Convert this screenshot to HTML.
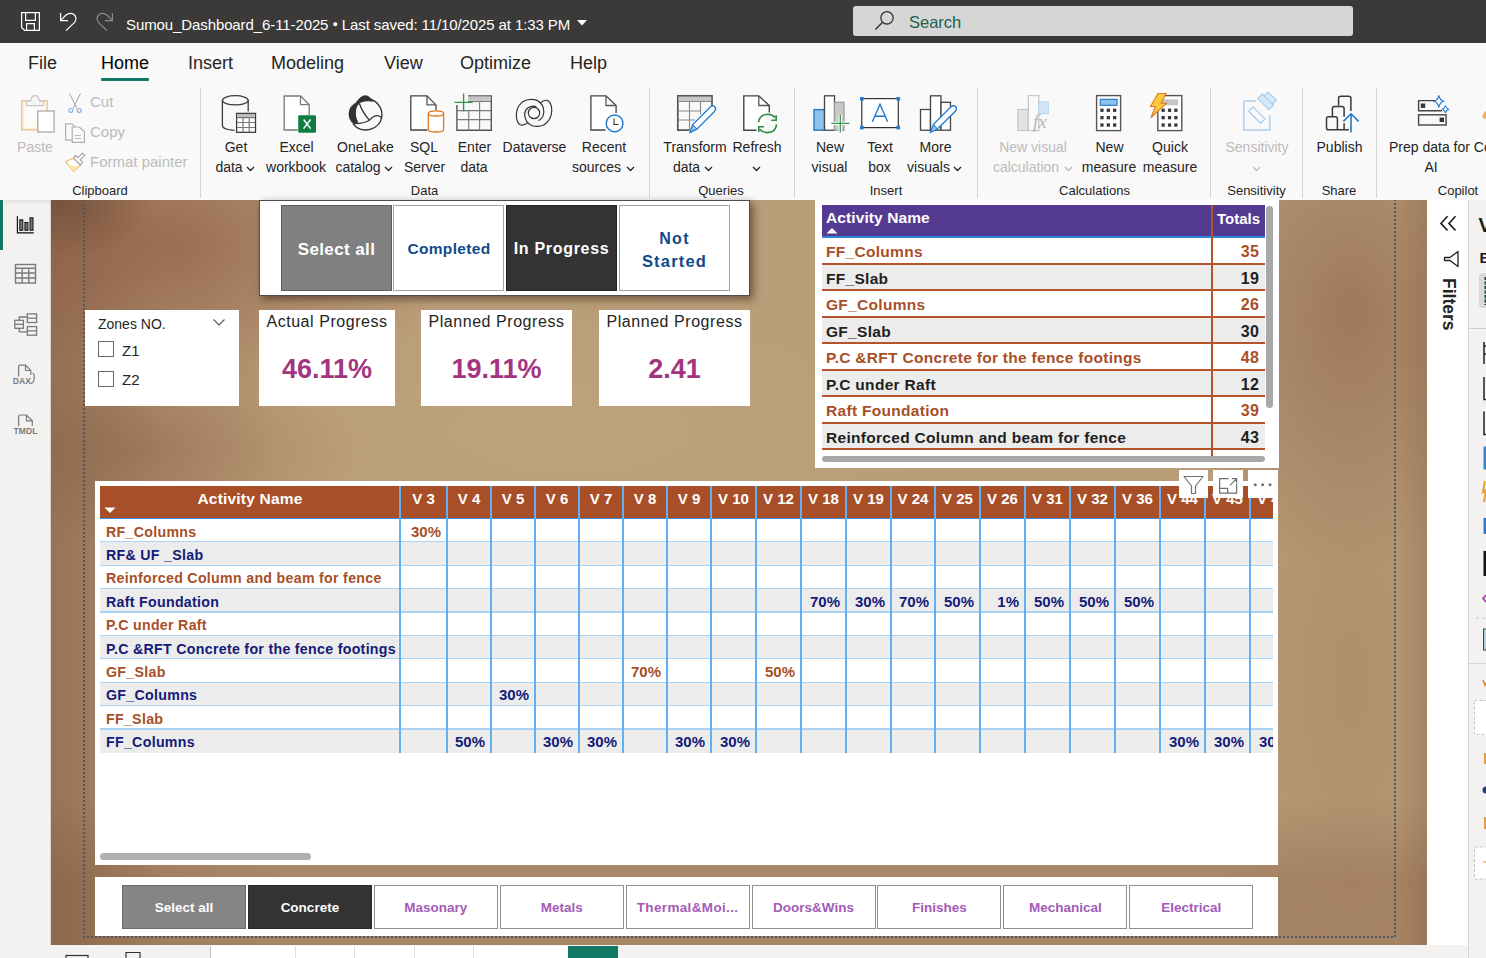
<!DOCTYPE html>
<html><head><meta charset="utf-8">
<style>
*{margin:0;padding:0;box-sizing:border-box}
html,body{width:1486px;height:958px;overflow:hidden;background:#f3f2f1;font-family:"Liberation Sans",sans-serif;position:relative}
.a{position:absolute;white-space:nowrap}
.c{position:absolute;white-space:nowrap;text-align:center}
#title{left:0;top:0;width:1486px;height:43px;background:#3b3a39}
#tabs{left:0;top:43px;width:1486px;height:42px;background:#f9f9f9}
#ribbon{left:0;top:85px;width:1486px;height:115px;background:#f9f9f9}
#nav{left:0;top:200px;width:51px;height:758px;background:#f3f2f1}
#canvas{left:51px;top:200px;width:1376px;height:745px;background:#a8845f;overflow:hidden}
#filters{left:1427px;top:200px;width:41px;height:758px;background:#fff}
#viz{left:1468px;top:200px;width:18px;height:758px;background:#f3f2f1;border-left:1px solid #e1dfdd}
#bottom{left:51px;top:945px;width:1376px;height:13px;background:#f3f2f1}
.rl{font-size:14px;line-height:20px;color:#252423}
.gl{font-size:13px;line-height:16px;color:#252423}
.dis{color:#bdbbb9}
.sep{position:absolute;top:88px;width:1px;height:110px;background:#d6d4d2}
</style></head>
<body>
<div id="title" class="a">
 <svg class="a" style="left:0;top:0" width="130" height="43" viewBox="0 0 130 43">
  <g fill="none" stroke="#fff" stroke-width="1.2">
   <path d="M21.6 12.6 H39.4 V30.4 H24.6 L21.6 27.4 Z"/>
   <path d="M25.6 12.6 V20.4 H35.4 V12.6"/>
   <path d="M26.6 30.4 V23.6 H34.4 V30.4"/>
  </g>
  <g fill="none" stroke="#fff" stroke-width="1.2">
   <path d="M60.6 13 V20.6 H68"/>
   <path d="M60.8 20.4 L66 15 Q70 12 74 14.5 Q77.6 18 74.6 22.4 L66 30.6"/>
  </g>
  <g fill="none" stroke="#8c8c8c" stroke-width="1.2">
   <path d="M112.4 13 V20.6 H105"/>
   <path d="M112.2 20.4 L107 15 Q103 12 99 14.5 Q95.4 18 98.4 22.4 L107 30.6"/>
  </g>
 </svg>
 <div class="a" style="left:126px;top:16px;font-size:15px;color:#fff;white-space:nowrap;letter-spacing:-0.1px">Sumou_Dashboard_6-11-2025 <span style="font-size:9px;position:relative;top:-3px">&#9679;</span> Last saved: 11/10/2025 at 1:33 PM</div>
 <svg class="a" style="left:576px;top:19px" width="12" height="8"><path d="M1 1 H11 L6 6.5 Z" fill="#fff"/></svg>
 <div class="a" style="left:853px;top:6px;width:500px;height:30px;background:#d6d6d6;border-radius:3px"></div>
 <svg class="a" style="left:872px;top:9px" width="24" height="24" viewBox="0 0 24 24"><circle cx="15" cy="8.8" r="6.2" fill="none" stroke="#333" stroke-width="1.3"/><path d="M10.6 13.2 L3.4 20.4" stroke="#333" stroke-width="1.4"/></svg>
 <div class="a" style="left:909px;top:13px;font-size:16.5px;color:#20604f">Search</div>
</div>

<div id="tabs" class="a">
 <div class="a" style="left:28px;top:10px;font-size:18px;color:#252423">File</div>
 <div class="a" style="left:101px;top:10px;font-size:18px;color:#000">Home</div>
 <div class="a" style="left:101px;top:35px;width:48px;height:3px;background:#117865;border-radius:1px"></div>
 <div class="a" style="left:188px;top:10px;font-size:18px;color:#252423">Insert</div>
 <div class="a" style="left:271px;top:10px;font-size:18px;color:#252423">Modeling</div>
 <div class="a" style="left:384px;top:10px;font-size:18px;color:#252423">View</div>
 <div class="a" style="left:460px;top:10px;font-size:18px;color:#252423">Optimize</div>
 <div class="a" style="left:570px;top:10px;font-size:18px;color:#252423">Help</div>
</div>

<div id="ribbon" class="a">
<div class="c rl dis" style="left:-65px;top:52px;width:200px">Paste</div>
<div class="a rl dis" style="left:90px;top:7px;font-size:15px">Cut</div>
<div class="a rl dis" style="left:90px;top:37px;font-size:15px">Copy</div>
<div class="a rl dis" style="left:90px;top:67px;font-size:15px">Format painter</div>
<div class="c gl" style="left:0px;top:98px;width:200px">Clipboard</div>
<div class="sep" style="left:200px;top:3px"></div>
<div class="c rl" style="left:136px;top:52px;width:200px">Get</div>
<div class="c rl" style="left:129px;top:72px;width:200px">data</div>
<svg class="a" style="left:246px;top:81px" width="9" height="6"><path d="M1 1 L4.5 4.5 L8 1" fill="none" stroke="#252423" stroke-width="1.3"/></svg>
<div class="c rl" style="left:196.5px;top:52px;width:200px">Excel</div>
<div class="c rl" style="left:196px;top:72px;width:200px">workbook</div>
<div class="c rl" style="left:265.5px;top:52px;width:200px">OneLake</div>
<div class="c rl" style="left:258px;top:72px;width:200px">catalog</div>
<svg class="a" style="left:384px;top:81px" width="9" height="6"><path d="M1 1 L4.5 4.5 L8 1" fill="none" stroke="#252423" stroke-width="1.3"/></svg>
<div class="c rl" style="left:324px;top:52px;width:200px">SQL</div>
<div class="c rl" style="left:324.5px;top:72px;width:200px">Server</div>
<div class="c rl" style="left:374.5px;top:52px;width:200px">Enter</div>
<div class="c rl" style="left:374px;top:72px;width:200px">data</div>
<div class="c rl" style="left:434.5px;top:52px;width:200px">Dataverse</div>
<div class="c rl" style="left:504px;top:52px;width:200px">Recent</div>
<div class="c rl" style="left:496.5px;top:72px;width:200px">sources</div>
<svg class="a" style="left:626px;top:81px" width="9" height="6"><path d="M1 1 L4.5 4.5 L8 1" fill="none" stroke="#252423" stroke-width="1.3"/></svg>
<div class="c gl" style="left:324.5px;top:98px;width:200px">Data</div>
<div class="sep" style="left:649px;top:3px"></div>
<div class="c rl" style="left:595px;top:52px;width:200px">Transform</div>
<div class="c rl" style="left:586.5px;top:72px;width:200px">data</div>
<svg class="a" style="left:704px;top:81px" width="9" height="6"><path d="M1 1 L4.5 4.5 L8 1" fill="none" stroke="#252423" stroke-width="1.3"/></svg>
<div class="c rl" style="left:657px;top:52px;width:200px">Refresh</div>
<svg class="a" style="left:752px;top:81px" width="9" height="6"><path d="M1 1 L4.5 4.5 L8 1" fill="none" stroke="#252423" stroke-width="1.3"/></svg>
<div class="c gl" style="left:621px;top:98px;width:200px">Queries</div>
<div class="sep" style="left:794px;top:3px"></div>
<div class="c rl" style="left:730px;top:52px;width:200px">New</div>
<div class="c rl" style="left:729.5px;top:72px;width:200px">visual</div>
<div class="c rl" style="left:780px;top:52px;width:200px">Text</div>
<div class="c rl" style="left:779.5px;top:72px;width:200px">box</div>
<div class="c rl" style="left:835.5px;top:52px;width:200px">More</div>
<div class="c rl" style="left:828.5px;top:72px;width:200px">visuals</div>
<svg class="a" style="left:953px;top:81px" width="9" height="6"><path d="M1 1 L4.5 4.5 L8 1" fill="none" stroke="#252423" stroke-width="1.3"/></svg>
<div class="c gl" style="left:786px;top:98px;width:200px">Insert</div>
<div class="sep" style="left:977px;top:3px"></div>
<div class="c rl dis" style="left:933px;top:52px;width:200px">New visual</div>
<div class="c rl dis" style="left:926px;top:72px;width:200px">calculation</div>
<svg class="a" style="left:1064px;top:81px" width="9" height="6"><path d="M1 1 L4.5 4.5 L8 1" fill="none" stroke="#bdbbb9" stroke-width="1.3"/></svg>
<div class="c rl" style="left:1009.5px;top:52px;width:200px">New</div>
<div class="c rl" style="left:1009px;top:72px;width:200px">measure</div>
<div class="c rl" style="left:1070px;top:52px;width:200px">Quick</div>
<div class="c rl" style="left:1070px;top:72px;width:200px">measure</div>
<div class="c gl" style="left:994.5px;top:98px;width:200px">Calculations</div>
<div class="sep" style="left:1210px;top:3px"></div>
<div class="c rl dis" style="left:1157px;top:52px;width:200px">Sensitivity</div>
<svg class="a" style="left:1252px;top:81px" width="9" height="6"><path d="M1 1 L4.5 4.5 L8 1" fill="none" stroke="#bdbbb9" stroke-width="1.3"/></svg>
<div class="c gl" style="left:1156.5px;top:98px;width:200px">Sensitivity</div>
<div class="sep" style="left:1302px;top:3px"></div>
<div class="c rl" style="left:1239.5px;top:52px;width:200px">Publish</div>
<div class="c gl" style="left:1239px;top:98px;width:200px">Share</div>
<div class="sep" style="left:1376px;top:3px"></div>
<div class="a rl" style="left:1389px;top:52px">Prep data for Copilot</div>
<div class="c rl" style="left:1331px;top:72px;width:200px">AI</div>
<div class="c gl" style="left:1358px;top:98px;width:200px">Copilot</div></div>

<svg class="a" style="left:0;top:85px" width="1486" height="115" viewBox="0 85 1486 115">
<!-- Paste -->
<rect x="21.8" y="100.8" width="25.4" height="29" fill="#fdfbf5" stroke="#eac59a" stroke-width="1.5"/><rect x="23.4" y="102.4" width="22.2" height="25.8" fill="none" stroke="#fdf0c8" stroke-width="1.2"/>
<path d="M26.4 105.6 V101 H30.5 Q31.5 95.5 35 95.5 Q38.5 95.5 39.5 101 H43.4 V105.6 Z" fill="#f5f5f5" stroke="#c8c8c8" stroke-width="1.3"/>
<rect x="37.8" y="111" width="16.3" height="21" fill="#fff" stroke="#b4b4b4" stroke-width="1.5"/>
<!-- Cut -->
<g stroke="#a9a9a9" stroke-width="1" fill="none"><path d="M69.5 93.5 L77 108.5 M80.5 93.5 L73 108.5"/></g>
<g stroke="#7fb3e0" stroke-width="1.2" fill="none"><circle cx="70.8" cy="110.4" r="1.9"/><circle cx="79.2" cy="110.4" r="1.9"/></g>
<!-- Copy -->
<g stroke="#b0b0b0" stroke-width="1.2" fill="#fafafa"><path d="M65.6 123.8 H72 L75 126.8 V140.2 H65.6 Z"/><path d="M72.2 127 H79.5 L84.4 131.8 V142.4 H72.2 Z"/></g>
<g stroke="#b8b8b8" stroke-width="1"><path d="M75 135.5 H81 M75 138.5 H81"/></g>
<!-- Format painter -->
<path d="M73.5 158.2 L65.6 161.6 L73.6 171.4 L80.6 165 Z" fill="#fff" stroke="#efb56a" stroke-width="1.1" stroke-linejoin="round"/>
<path d="M67.5 164 L74 166.5 L78.6 166.6 L73.6 171.2 Z" fill="#fde7a0"/>
<path d="M73.5 158.2 L75.6 155.4 L78 157.6 L82.4 153.2 L84.8 155.4 L80.3 159.8 L82.5 162.4 L80.6 165 Z" fill="#fff" stroke="#a9a9a9" stroke-width="1.2" stroke-linejoin="round"/>
<!-- Get data -->
<g fill="none" stroke="#3c3c3c" stroke-width="1.3">
<ellipse cx="235.3" cy="100.3" rx="12.9" ry="4.6"/>
<path d="M222.4 100.3 V125.5 Q222.4 129.6 234.6 130.3"/>
<path d="M248.2 100.3 V111.5"/>
</g>
<rect x="236.6" y="113.4" width="18.9" height="18.9" fill="#fff" stroke="#3c3c3c" stroke-width="1.3"/>
<rect x="237.3" y="114" width="17.5" height="3.3" fill="#bdbdbd"/>
<path d="M237 122.5 H255 M237 127.5 H255 M243 117.5 V132 M249.2 117.5 V132 M237 117.6 H255" stroke="#777" stroke-width="1.2"/>
<!-- Excel -->
<path d="M297.6 130 H284.2 V96 H300.5 L309.2 104.7 V115" fill="#fff" stroke="#7a7a7a" stroke-width="1.3"/>
<path d="M300.5 96 V104.7 H309.2" fill="none" stroke="#7a7a7a" stroke-width="1.3"/>
<rect x="298.2" y="115.2" width="17.8" height="17.6" rx="1.2" fill="#107c41"/>
<path d="M303.6 119.5 L310.6 128.6 M310.6 119.5 L303.6 128.6" stroke="#fff" stroke-width="1.5"/>
<!-- OneLake -->
<path d="M373.6 101.8 Q369 95 365.5 95.3 Q360 95.8 356.5 102.2 Q348.6 106 348.6 114 Q348.8 120 353 123.6 L358.4 122.6 Q355.2 117 356 110.5 Q357 104.6 361 102.6 Q367 100.4 373.6 101.8 Z" fill="#333"/>
<path d="M356.5 102.2 Q360.5 98.5 366 98.5 Q376 98.8 380.6 108 Q383.4 115 380.4 121.5 Q376 129.6 365.5 130 Q357.5 130 353 123.6" fill="none" stroke="#333" stroke-width="1.4"/>
<path d="M359.4 103.5 Q363 113.5 369.5 120.2" fill="none" stroke="#333" stroke-width="1.3"/>
<path d="M353.5 123.5 Q362.5 124 369.5 120.2 Q373.5 115.5 377.5 115.7 Q380 116 381.3 117.6" fill="none" stroke="#333" stroke-width="1.3"/>
<!-- SQL -->
<path d="M427.5 130 H410.8 V95.9 H427 L436 104.9 V110" fill="#fff" stroke="#444" stroke-width="1.3"/>
<path d="M427 95.9 V104.9 H436" fill="none" stroke="#555" stroke-width="1.3"/>
<path d="M428.3 113.4 V129.4 Q428.3 132 436 132 Q443.6 132 443.6 129.4 V113.4" fill="#fff" stroke="#e07a1f" stroke-width="1.3"/>
<ellipse cx="436" cy="113.4" rx="7.6" ry="2.6" fill="#fff" stroke="#e07a1f" stroke-width="1.3"/>
<!-- Enter data -->
<path d="M456.9 105 V130.2 H491.3 V95.9 H468" fill="none" stroke="#555" stroke-width="1.4"/>
<rect x="468" y="97" width="22.5" height="3.4" fill="#c6c6c6"/>
<path d="M457 110.6 H491 M457 119.6 H491 M468.7 110.6 V130 M479.6 101 V130 M468 101.4 H491" stroke="#7a7a7a" stroke-width="1.1"/>
<path d="M463.6 93.4 V111.6 M454.5 102.4 H472.6" stroke="#2e9a4f" stroke-width="1.4"/>
<!-- Dataverse -->
<g fill="none" stroke="#333" stroke-width="1.2">
<path d="M528 122.6 Q523 126.5 519.5 124.5 Q516 121.5 516.4 113 Q517.5 104.5 524.5 100.8 Q531 98 537.5 100.6 Q543.8 104 543.8 112 Q543.5 118 538.5 120.6"/>
<path d="M540.2 103.2 Q543.5 99.8 547 100.3 Q551.6 101.6 551.8 110.5 Q551.5 120 544 124.8 Q538 127.6 531.5 125.5 Q525.2 122.5 524.6 114.5 Q525 108.5 530.5 106.6 Q534 105.6 536.5 107"/>
<circle cx="534" cy="113" r="5.7"/>
</g>
<!-- Recent -->
<path d="M605.5 130 H590.9 V95.9 H606 L616.1 105.5 V113" fill="#fff" stroke="#444" stroke-width="1.3"/>
<path d="M606 95.9 V105.5 H616.1" fill="none" stroke="#555" stroke-width="1.3"/>
<circle cx="614.6" cy="123.4" r="8.4" fill="#fff" stroke="#1f7ad0" stroke-width="1.4"/>
<path d="M614 118.5 V124.5 H618.5" fill="none" stroke="#333" stroke-width="1.1"/>
<!-- Transform -->
<path d="M689.5 130.2 H677.8 V95.9 H712 V107" fill="none" stroke="#555" stroke-width="1.7"/>
<rect x="678.6" y="96.8" width="32.6" height="4.3" fill="#c8c8c8"/>
<path d="M678 101.5 H711.5 M678 111 H701 M678 120 H695 M689.5 101.5 V130 M700.5 101.5 V114" stroke="#888" stroke-width="1.1"/>
<path d="M690 132.4 L692.8 124.5 L710.5 106.8 Q713.4 105 715 107 Q716.5 109 714.5 111.5 L696.8 129.2 Z" fill="#fff" stroke="#1f7ad0" stroke-width="1.3"/>
<path d="M690 132.4 L692.8 124.5 L696.8 129.2 Z" fill="#8cc1ef" stroke="#1f7ad0" stroke-width="1"/>
<!-- Refresh -->
<path d="M756.5 130.2 H743.8 V95.9 H758.8 L769.3 105.5 V112.5" fill="#fff" stroke="#444" stroke-width="1.4"/>
<path d="M758.8 95.9 V105.5 H769.3" fill="none" stroke="#555" stroke-width="1.3"/>
<g fill="none" stroke="#2e8b46" stroke-width="1.6">
<path d="M758.5 122.5 Q759.5 114.5 767.6 114.3 Q772.5 114.5 775.2 117.6"/>
<path d="M776.6 124.4 Q775.8 132.4 767.6 132.6 Q762.5 132.5 759.8 129.2"/>
<path d="M776.2 115.2 V120.2 H771.2 M758.8 132 V126.8 H764"/>
</g>
<!-- New visual -->
<rect x="814" y="109.6" width="10.5" height="20.6" fill="#8dc2ee" stroke="#1f72c0" stroke-width="1.3"/>
<rect x="824.5" y="95.8" width="10" height="34.4" fill="#fff" stroke="#444" stroke-width="1.3"/>
<rect x="834.5" y="102.3" width="9.5" height="27.9" fill="#c8c8c8" stroke="#9a9a9a" stroke-width="1.2"/>
<path d="M840.3 114.4 V132.4 M831.3 123.4 H849.8" stroke="#fafafa" stroke-width="3.5"/>
<path d="M840.3 114.4 V132.4 M831.3 123.4 H849.3" stroke="#3a9a55" stroke-width="1.3"/>
<!-- Text box -->
<rect x="861.8" y="98.6" width="36.5" height="29" fill="#fff" stroke="#333" stroke-width="1.2"/>
<g fill="#1f7ad0"><rect x="860" y="97" width="3.6" height="3.6"/><rect x="896.5" y="97" width="3.6" height="3.6"/><rect x="860" y="125.8" width="3.6" height="3.6"/><rect x="896.5" y="125.8" width="3.6" height="3.6"/></g>
<path d="M872.4 121.8 L880 104.2 L887.6 121.8 M874.8 116.2 H885.2" fill="none" stroke="#1f7ad0" stroke-width="1.4"/>
<!-- More visuals -->
<g fill="#fff" stroke="#444" stroke-width="1.3"><rect x="920.5" y="109.5" width="10" height="20.7"/><rect x="930.5" y="95.8" width="10.5" height="34.4"/><rect x="941" y="102.3" width="9.5" height="27.9"/></g>
<path d="M930.5 132.3 L933.5 124.4 L951.3 106.6 Q954.2 104.8 955.8 106.8 Q957.3 108.8 955.3 111.3 L937.5 129 Z" fill="#fff" stroke="#1f7ad0" stroke-width="1.3"/>
<path d="M930.5 132.3 L933.5 124.4 L937.5 129 Z" fill="#8cc1ef" stroke="#1f7ad0" stroke-width="1"/>
<!-- New visual calc (disabled) -->
<rect x="1017.8" y="109.5" width="10.5" height="21" fill="#e3e3e3" stroke="#c6c6c6" stroke-width="1.2"/>
<rect x="1028.3" y="95.6" width="10.5" height="34.9" fill="#fafafa" stroke="#c6c6c6" stroke-width="1.2"/>
<rect x="1038.8" y="101.8" width="9.6" height="12" fill="#d4e6f5" stroke="#b5d5ee" stroke-width="1"/>
<text x="1033" y="128" font-family="Liberation Serif" font-style="italic" font-size="19" fill="#b8b8b8">fx</text>
<!-- New measure -->
<rect x="1096.6" y="95.6" width="24" height="35" fill="#fff" stroke="#555" stroke-width="1.4"/>
<rect x="1100.2" y="99.3" width="16.8" height="6" fill="#8dc2ee" stroke="#1f72c0" stroke-width="1.1"/>
<g fill="#3a3a3a"><rect x="1100.3" y="108.6" width="3.3" height="3.3"/><rect x="1106.7" y="108.6" width="3.3" height="3.3"/><rect x="1113" y="108.6" width="3.3" height="3.3"/><rect x="1100.3" y="116" width="3.3" height="3.3"/><rect x="1106.7" y="116" width="3.3" height="3.3"/><rect x="1113" y="116" width="3.3" height="3.3"/><rect x="1100.3" y="123.4" width="3.3" height="3.3"/><rect x="1106.7" y="123.4" width="3.3" height="3.3"/><rect x="1113" y="123.4" width="3.3" height="3.3"/></g>
<!-- Quick measure -->
<rect x="1157.8" y="95.6" width="24" height="35" fill="#fff" stroke="#555" stroke-width="1.4"/>
<rect x="1161.4" y="99.3" width="16.8" height="6" fill="#c6c6c6"/>
<g fill="#3a3a3a"><rect x="1161.5" y="108.6" width="3.3" height="3.3"/><rect x="1167.9" y="108.6" width="3.3" height="3.3"/><rect x="1174.2" y="108.6" width="3.3" height="3.3"/><rect x="1161.5" y="116" width="3.3" height="3.3"/><rect x="1167.9" y="116" width="3.3" height="3.3"/><rect x="1174.2" y="116" width="3.3" height="3.3"/><rect x="1161.5" y="123.4" width="3.3" height="3.3"/><rect x="1167.9" y="123.4" width="3.3" height="3.3"/><rect x="1174.2" y="123.4" width="3.3" height="3.3"/></g>
<path d="M1158 93.5 H1166 L1161 103.3 H1166.5 L1151 117.5 L1155.5 106.5 H1150.5 Z" fill="#ffc83d" stroke="#e07a1f" stroke-width="1.1"/>
<!-- Sensitivity disabled -->
<path d="M1243.8 101 V130 H1269.8 V115" fill="none" stroke="#a9cdec" stroke-width="1.4"/>
<path d="M1243.8 101 H1256" fill="none" stroke="#a9cdec" stroke-width="1.4"/>
<path d="M1248.6 111.3 L1253 106.9 L1265 118.9 L1260.6 123.3 Z" fill="none" stroke="#a9cdec" stroke-width="1.3"/>
<path d="M1257.7 98.6 L1262.4 94 L1273.5 105.1 L1268.9 109.7 Z M1264 96 L1268 92.3 L1276.4 100.2 L1272.6 104" fill="#d8e9f6" stroke="#a9cdec" stroke-width="1.3"/>
<!-- Publish -->
<g fill="none" stroke="#3a3a3a" stroke-width="1.5">
<path d="M1338.6 105.8 V98.3 Q1338.6 96.2 1340.7 96.2 H1348.8 Q1350.9 96.2 1350.9 98.3 V111"/>
<path d="M1332.4 116 V108.7 Q1332.4 106.6 1334.5 106.6 H1342 Q1344.1 106.6 1344.1 108.7 V116.7 M1344.1 123.2 V129.8"/>
<path d="M1348.8 129.8 H1328.6 Q1326.5 129.8 1326.5 127.7 V118.8 Q1326.5 116.7 1328.6 116.7 H1335.3 Q1337.4 116.7 1337.4 118.8 V129.8"/>
</g>
<path d="M1351 132.5 V114 M1343.4 121.4 L1351 113.8 L1358.6 121.4" fill="none" stroke="#1f7ac8" stroke-width="1.6"/>
<!-- Prep data for AI -->
<g fill="none" stroke="#444" stroke-width="1.4"><path d="M1441.5 100.6 H1418.6 V110.8 H1442"/><rect x="1418.6" y="114.8" width="27.5" height="10.2"/></g>
<g fill="#333"><rect x="1420.8" y="103.5" width="4.4" height="4.4"/><rect x="1439.6" y="117.6" width="4.4" height="4.4"/></g>
<path d="M1438.8 95.3 Q1439.8 100 1443.5 101.3 Q1439.8 102.6 1438.8 107.3 Q1437.8 102.6 1434.1 101.3 Q1437.8 100 1438.8 95.3 Z" fill="#fff" stroke="#1f7ad0" stroke-width="1.2"/>
<path d="M1445.5 105.5 Q1446 108 1448.5 109.2 Q1446 110.4 1445.5 113 Q1445 110.4 1442.5 109.2 Q1445 108 1445.5 105.5 Z" fill="#fff" stroke="#1f7ad0" stroke-width="1.1"/>
<path d="M1486 111 Q1482.5 113 1482.5 117 Q1483 119 1486 119" fill="#f0b050"/>
</svg>

<div class="a" style="left:0;top:200px;width:51px;height:758px;background:#f3f2f1"></div>
<div class="a" style="left:0;top:200px;width:51px;height:5px;background:linear-gradient(to bottom,#e2e1e0,#f3f2f1)"></div>
<div class="a" style="left:50px;top:200px;width:1px;height:745px;background:#d8d6d4"></div>
<div class="a" style="left:0;top:200px;width:3px;height:50px;background:#117865"></div><div class="a" style="left:3px;top:200px;width:1px;height:50px;background:#fff"></div>
<svg class="a" style="left:0;top:200px" width="51" height="250" viewBox="0 200 51 250">
<path d="M17.4 216.3 V232.8 H33.8" fill="none" stroke="#111" stroke-width="1.2"/>
<g fill="#777" stroke="#111" stroke-width="1"><rect x="19.8" y="219.8" width="3" height="10.5"/><rect x="24.9" y="222.5" width="3" height="7.8"/><rect x="30" y="217.8" width="3" height="12.5"/></g>
<g fill="none" stroke="#7a7a7a" stroke-width="1.4"><rect x="15.5" y="264.5" width="20" height="18.5"/><path d="M15.5 268.3 H35.5 M15.5 273 H35.5 M15.5 278 H35.5 M22.2 268.3 V283 M28.8 268.3 V283"/></g>
<g fill="none" stroke="#7a7a7a" stroke-width="1.3"><rect x="14.8" y="320.3" width="8.6" height="8" fill="#f3f2f1"/><path d="M14.8 324.3 H23.4"/><path d="M19.3 320.3 V317 H27.3 M19.3 328.3 V331.8 H27.3"/><rect x="27.3" y="313.9" width="9.3" height="8.6" fill="#f3f2f1"/><path d="M27.3 318.2 H36.6"/><rect x="27.3" y="326.6" width="9.3" height="8.6" fill="#f3f2f1"/><path d="M27.3 330.9 H36.6"/></g>
<g fill="none" stroke="#7a7a7a" stroke-width="1.2"><path d="M18.6 376.5 V366.8 Q18.6 365.2 20.2 365.2 H25.5 L30.8 370.5 V375 M25.5 365.2 V370.5 H30.8 M32.6 373 Q34.6 373.5 34.2 378 Q34 382.5 31 383.6"/></g>
<text x="12.8" y="384.2" font-family="Liberation Sans" font-weight="bold" font-size="8.6" fill="#7a7a7a">DAX</text>
<g fill="none" stroke="#7a7a7a" stroke-width="1.2"><path d="M18.6 426 V416.6 Q18.6 415 20.2 415 H26.5 L32.3 420.8 V426 M26.5 415 V420.8 H32.3"/></g>
<text x="13.6" y="434.2" font-family="Liberation Sans" font-weight="bold" font-size="8.6" fill="#7a7a7a">TMDL</text>
</svg>
<div class="a" style="left:1427px;top:200px;width:41px;height:745px;background:#fff"></div>
<svg class="a" style="left:1427px;top:200px" width="41" height="140" viewBox="1427 200 41 140">
<path d="M1447.5 216.3 L1441 223.4 L1447.5 230.5 M1455.5 216.3 L1449 223.4 L1455.5 230.5" fill="none" stroke="#222" stroke-width="1.7"/>
<path d="M1458 251.5 V266.5 L1450 260.5 H1444.5 V257.5 H1450 Z" fill="none" stroke="#222" stroke-width="1.3" stroke-linejoin="round"/>
</svg>
<div class="a" style="left:1439px;top:278px;font-size:17.5px;font-weight:bold;line-height:20px;color:#252423;transform-origin:0 0;transform:translate(20px,0) rotate(90deg)">Filters</div>
<div class="a" style="left:1468px;top:200px;width:18px;height:758px;background:#f3f2f1;border-left:1px solid #d6d4d2"></div>
<div class="a" style="left:1478.5px;top:213.5px;font-size:19.5px;font-weight:bold;line-height:22px;color:#1b1a19">V</div>
<div class="a" style="left:1479.5px;top:249px;font-size:15px;font-weight:bold;line-height:18px;color:#1b1a19">B</div>
<div class="a" style="left:1479px;top:273px;width:12px;height:35px;background:#d9d9d9;border-radius:4px"></div>
<svg class="a" style="left:1469px;top:200px" width="17" height="758" viewBox="1469 200 17 758">
<path d="M1469 328.5 H1486" stroke="#cfcdcb" stroke-width="1"/>
<path d="M1485.5 277 V305" stroke="#2a3a35" stroke-width="2" stroke-dasharray="3 1.5"/><path d="M1485.5 283 V303" stroke="#3a8a6a" stroke-width="1" stroke-dasharray="2 5"/>
<g fill="none" stroke="#222" stroke-width="1.5"><path d="M1484 342 V364 M1486 346 H1484 M1486 354 H1484"/><path d="M1484 377 V399.5 H1486"/><path d="M1484 411.5 V434.5 H1486"/></g>
<rect x="1483.5" y="446.5" width="3" height="23" fill="#3b86d4"/>
<path d="M1485 481 L1483 492 L1486 490 L1484 502" stroke="#e8a030" stroke-width="2" fill="none"/>
<rect x="1483.5" y="518" width="3" height="16" fill="#2b7fd0"/>
<rect x="1483.5" y="551" width="3" height="25" fill="#111"/>
<path d="M1486 595 L1483 598.5 L1486 602" stroke="#a03aa0" stroke-width="1.6" fill="none"/>
<path d="M1476 618 H1486" stroke="#c8c8c8" stroke-dasharray="3 3"/>
<rect x="1483.5" y="629" width="3" height="21" fill="#b5d0d8" stroke="#444" stroke-width="1"/>
<path d="M1469 663.5 H1486" stroke="#d6d4d2"/>
<path d="M1483 680 L1485 685 L1486 683" stroke="#d88a20" stroke-width="1.6" fill="none"/>
<rect x="1474.5" y="700.5" width="13" height="34" fill="#fff" stroke="#c4c4c4" stroke-dasharray="3 2"/>
<rect x="1484" y="753" width="2" height="11" fill="#e0a040"/>
<circle cx="1486" cy="790" r="3.5" fill="#2a3a70"/>
<rect x="1484" y="817" width="2" height="12" fill="#e0a040"/>
<rect x="1474.5" y="847" width="13" height="32" fill="#fff" stroke="#c4c4c4" stroke-dasharray="3 2"/>
<path d="M1483 862 H1486" stroke="#e0a040" stroke-width="1.2"/>
</svg>
<div class="a" style="left:51px;top:945px;width:1376px;height:13px;background:#f3f2f1"></div>
<div class="a" style="left:210px;top:946px;width:358px;height:12px;background:#fff"></div>
<div class="a" style="left:210px;top:946px;width:1px;height:12px;background:#c8c6c4"></div>
<div class="a" style="left:295px;top:946px;width:1px;height:12px;background:#e1dfdd"></div>
<div class="a" style="left:354px;top:946px;width:1px;height:12px;background:#e1dfdd"></div>
<div class="a" style="left:414px;top:946px;width:1px;height:12px;background:#e1dfdd"></div>
<div class="a" style="left:473px;top:946px;width:1px;height:12px;background:#e1dfdd"></div>
<div class="a" style="left:568px;top:946px;width:50px;height:12px;background:#117865"></div>
<svg class="a" style="left:51px;top:945px" width="159" height="13" viewBox="51 945 159 13"><rect x="66" y="955.5" width="22" height="6" fill="none" stroke="#333" stroke-width="1.2"/><path d="M126 958 V952.5 H140 V958" fill="none" stroke="#333" stroke-width="1.2"/></svg>

<div id="canvas" class="a" style="background:
radial-gradient(ellipse 90px 60px at 10px 0px, rgba(80,50,38,0.40), rgba(80,50,38,0) 100%),
radial-gradient(ellipse 290px 160px at 120px 45px, rgba(125,64,44,0.44), rgba(125,64,44,0) 100%),
linear-gradient(to right, rgba(115,72,50,0.48) 0px, rgba(115,72,50,0.40) 33px, rgba(115,72,50,0.14) 110px, rgba(115,72,50,0) 230px),
radial-gradient(ellipse 220px 100px at 90px 250px, rgba(125,70,48,0.30), rgba(125,70,48,0) 100%),
radial-gradient(ellipse 190px 260px at 1300px 110px, rgba(120,76,52,0.42), rgba(120,76,52,0) 100%),
radial-gradient(ellipse 150px 420px at 1300px 480px, rgba(130,90,62,0.18), rgba(130,90,62,0) 100%),
radial-gradient(ellipse 420px 150px at 520px 230px, rgba(200,175,135,0.35), rgba(200,175,135,0) 100%),
linear-gradient(to left, rgba(120,80,55,0.25) 0px, rgba(120,80,55,0) 30px),
linear-gradient(to bottom, rgba(125,82,58,0) 600px, rgba(125,82,58,0.30) 680px, rgba(125,82,58,0.30) 745px),
#b99c78"></div>
<svg class="a" style="left:0;top:0" width="1486" height="958"><path d="M84 200 V937 H1395 V200" fill="none" stroke="#50575e" stroke-width="2" stroke-dasharray="2 2"/></svg>
<div class="a" style="left:259px;top:200px;width:491px;height:96px;background:#fff;border:1px solid #4e4e4e;box-shadow:3px 3px 8px rgba(40,25,15,0.55)"></div>
<div class="a" style="left:281px;top:205px;width:111px;height:86px;background:#808080;border:1px solid #5e5e5e"></div>
<div class="a" style="left:393px;top:205px;width:111px;height:86px;background:#fff;border:1px solid #a6a6a6"></div>
<div class="a" style="left:506px;top:205px;width:111px;height:86px;background:#333;border:1px solid #222"></div>
<div class="a" style="left:619px;top:205px;width:111px;height:86px;background:#fff;border:1px solid #a6a6a6"></div>
<div class="c" style="left:256.5px;top:240px;width:160px;font-size:17px;line-height:19px;color:#fff;font-weight:bold;letter-spacing:0.4px">Select all</div>
<div class="c" style="left:369px;top:240px;width:160px;font-size:15.5px;line-height:17.5px;color:#114a8a;font-weight:bold;letter-spacing:0.35px">Completed</div>
<div class="c" style="left:481.5px;top:240px;width:160px;font-size:16px;line-height:18px;color:#fff;font-weight:bold;letter-spacing:0.7px">In Progress</div>
<div class="c" style="left:594.5px;top:229.5px;width:160px;font-size:16px;line-height:18px;color:#114a8a;font-weight:bold;letter-spacing:1.3px">Not</div>
<div class="c" style="left:594.5px;top:251.5px;width:160px;font-size:16.5px;line-height:18.5px;color:#114a8a;font-weight:bold;letter-spacing:1.2px">Started</div>
<div class="a" style="left:85px;top:310px;width:154px;height:96px;background:#fff"></div>
<div class="a" style="left:98px;top:316px;font-size:14px;color:#252423">Zones NO.</div>
<svg class="a" style="left:212px;top:318px" width="14" height="9"><path d="M1.5 1.5 L7 7 L12.5 1.5" fill="none" stroke="#555" stroke-width="1.1"/></svg>
<div class="a" style="left:98px;top:341px;width:16px;height:16px;border:1px solid #666;background:#fff"></div>
<div class="a" style="left:98px;top:371px;width:16px;height:16px;border:1px solid #666;background:#fff"></div>
<div class="a" style="left:122px;top:342px;font-size:15px;color:#252423">Z1</div>
<div class="a" style="left:122px;top:371px;font-size:15px;color:#252423">Z2</div>
<div class="a" style="left:259px;top:310px;width:136px;height:96px;background:#fff"></div>
<div class="c" style="left:259px;top:313px;width:136px;font-size:16px;letter-spacing:0.55px;color:#252423">Actual Progress</div>
<div class="c" style="left:259px;top:354px;width:136px;font-size:27px;font-weight:bold;color:#a3357f">46.11%</div>
<div class="a" style="left:421px;top:310px;width:151px;height:96px;background:#fff"></div>
<div class="c" style="left:421px;top:313px;width:151px;font-size:16px;letter-spacing:0.55px;color:#252423">Planned Progress</div>
<div class="c" style="left:421px;top:354px;width:151px;font-size:27px;font-weight:bold;color:#a3357f">19.11%</div>
<div class="a" style="left:599px;top:310px;width:151px;height:96px;background:#fff"></div>
<div class="c" style="left:599px;top:313px;width:151px;font-size:16px;letter-spacing:0.55px;color:#252423">Planned Progress</div>
<div class="c" style="left:599px;top:354px;width:151px;font-size:27px;font-weight:bold;color:#a3357f">2.41</div>
<div class="a" style="left:815px;top:200px;width:464px;height:268px;background:#fff"></div>
<div class="a" style="left:822px;top:205px;width:443px;height:32px;background:#553a92"></div>
<div class="a" style="left:822px;top:236px;width:443px;height:2px;background:#2f86e0"></div>
<div class="a" style="left:826px;top:209px;font-size:15.5px;letter-spacing:0.1px;font-weight:bold;color:#fff;line-height:18px">Activity Name</div>
<svg class="a" style="left:826px;top:227px" width="12" height="7"><path d="M0.5 6.5 L6 1 L11.5 6.5 Z" fill="#fff"/></svg>
<div class="a" style="left:1160px;top:209.5px;width:100px;text-align:right;font-size:15px;font-weight:bold;color:#fff;line-height:18px">Totals</div>
<div class="a" style="left:822px;top:238.0px;width:443px;height:26.5px;background:#fff"></div>
<div class="a" style="left:822px;top:262.5px;width:443px;height:2px;background:#b5532b"></div>
<div class="a" style="left:826px;top:243.0px;font-size:15.5px;letter-spacing:0.3px;font-weight:bold;color:#a84f28;line-height:18px">FF_Columns</div>
<div class="a" style="left:1160px;top:243.0px;width:99.5px;text-align:right;font-size:16px;letter-spacing:0.5px;font-weight:bold;color:#a84f28;line-height:18px">35</div>
<div class="a" style="left:822px;top:264.5px;width:443px;height:26.5px;background:#ececec"></div>
<div class="a" style="left:822px;top:289.0px;width:443px;height:2px;background:#b5532b"></div>
<div class="a" style="left:826px;top:269.5px;font-size:15.5px;letter-spacing:0.3px;font-weight:bold;color:#1f1f1f;line-height:18px">FF_Slab</div>
<div class="a" style="left:1160px;top:269.5px;width:99.5px;text-align:right;font-size:16px;letter-spacing:0.5px;font-weight:bold;color:#1f1f1f;line-height:18px">19</div>
<div class="a" style="left:822px;top:291.0px;width:443px;height:26.5px;background:#fff"></div>
<div class="a" style="left:822px;top:315.5px;width:443px;height:2px;background:#b5532b"></div>
<div class="a" style="left:826px;top:296.0px;font-size:15.5px;letter-spacing:0.3px;font-weight:bold;color:#a84f28;line-height:18px">GF_Columns</div>
<div class="a" style="left:1160px;top:296.0px;width:99.5px;text-align:right;font-size:16px;letter-spacing:0.5px;font-weight:bold;color:#a84f28;line-height:18px">26</div>
<div class="a" style="left:822px;top:317.5px;width:443px;height:26.5px;background:#ececec"></div>
<div class="a" style="left:822px;top:342.0px;width:443px;height:2px;background:#b5532b"></div>
<div class="a" style="left:826px;top:322.5px;font-size:15.5px;letter-spacing:0.3px;font-weight:bold;color:#1f1f1f;line-height:18px">GF_Slab</div>
<div class="a" style="left:1160px;top:322.5px;width:99.5px;text-align:right;font-size:16px;letter-spacing:0.5px;font-weight:bold;color:#1f1f1f;line-height:18px">30</div>
<div class="a" style="left:822px;top:344.0px;width:443px;height:26.5px;background:#fff"></div>
<div class="a" style="left:822px;top:368.5px;width:443px;height:2px;background:#b5532b"></div>
<div class="a" style="left:826px;top:349.0px;font-size:15.5px;letter-spacing:0.3px;font-weight:bold;color:#a84f28;line-height:18px">P.C &amp;RFT Concrete for the fence footings</div>
<div class="a" style="left:1160px;top:349.0px;width:99.5px;text-align:right;font-size:16px;letter-spacing:0.5px;font-weight:bold;color:#a84f28;line-height:18px">48</div>
<div class="a" style="left:822px;top:370.5px;width:443px;height:26.5px;background:#ececec"></div>
<div class="a" style="left:822px;top:395.0px;width:443px;height:2px;background:#b5532b"></div>
<div class="a" style="left:826px;top:375.5px;font-size:15.5px;letter-spacing:0.3px;font-weight:bold;color:#1f1f1f;line-height:18px">P.C under Raft</div>
<div class="a" style="left:1160px;top:375.5px;width:99.5px;text-align:right;font-size:16px;letter-spacing:0.5px;font-weight:bold;color:#1f1f1f;line-height:18px">12</div>
<div class="a" style="left:822px;top:397.0px;width:443px;height:26.5px;background:#fff"></div>
<div class="a" style="left:822px;top:421.5px;width:443px;height:2px;background:#b5532b"></div>
<div class="a" style="left:826px;top:402.0px;font-size:15.5px;letter-spacing:0.3px;font-weight:bold;color:#a84f28;line-height:18px">Raft Foundation</div>
<div class="a" style="left:1160px;top:402.0px;width:99.5px;text-align:right;font-size:16px;letter-spacing:0.5px;font-weight:bold;color:#a84f28;line-height:18px">39</div>
<div class="a" style="left:822px;top:423.5px;width:443px;height:26.5px;background:#ececec"></div>
<div class="a" style="left:822px;top:448.0px;width:443px;height:2px;background:#b5532b"></div>
<div class="a" style="left:826px;top:428.5px;font-size:15.5px;letter-spacing:0.3px;font-weight:bold;color:#1f1f1f;line-height:18px">Reinforced Column and beam for fence</div>
<div class="a" style="left:1160px;top:428.5px;width:99.5px;text-align:right;font-size:16px;letter-spacing:0.5px;font-weight:bold;color:#1f1f1f;line-height:18px">43</div>
<div class="a" style="left:1210.5px;top:205px;width:2px;height:252px;background:#b5532b"></div>
<div class="a" style="left:1266px;top:206px;width:7px;height:202px;background:#a8a8a8;border-radius:4px"></div>
<div class="a" style="left:822px;top:455.5px;width:443px;height:6px;background:#a8a8a8;border-radius:3px"></div>
<div class="a" style="left:95px;top:481px;width:1183px;height:384px;background:#fff"></div>
<div class="a" style="left:0;top:0;width:1273px;height:958px;overflow:hidden">
<div class="a" style="left:100px;top:486px;width:1173px;height:32px;background:#a84f28"></div>
<div class="a" style="left:100px;top:518px;width:1173px;height:1px;background:#3a8ee6"></div>
<div class="c" style="left:100px;top:490px;width:300px;font-size:15.5px;letter-spacing:0.2px;font-weight:bold;color:#fff;line-height:18px">Activity Name</div>
<svg class="a" style="left:104px;top:507px" width="12" height="7"><path d="M0.5 0.5 L6 6 L11.5 0.5 Z" fill="#fff"/></svg>
<div class="a" style="left:100px;top:541.2px;width:1173px;height:1.2px;background:#a9d4f8"></div>
<div class="a" style="left:106px;top:522.5px;font-size:14.2px;letter-spacing:0.3px;font-weight:bold;color:#a84f28;line-height:18px">RF_Columns</div>
<div class="a" style="left:347px;top:522.5px;width:94px;text-align:right;font-size:15px;font-weight:bold;color:#a84f28;line-height:18px">30%</div>
<div class="a" style="left:100px;top:542.4px;width:1173px;height:23.4px;background:#ececec"></div>
<div class="a" style="left:100px;top:564.6px;width:1173px;height:1.2px;background:#a9d4f8"></div>
<div class="a" style="left:106px;top:545.9px;font-size:14.2px;letter-spacing:0.3px;font-weight:bold;color:#141a78;line-height:18px">RF&amp; UF _Slab</div>
<div class="a" style="left:100px;top:588.0px;width:1173px;height:1.2px;background:#a9d4f8"></div>
<div class="a" style="left:106px;top:569.3px;font-size:14.2px;letter-spacing:0.3px;font-weight:bold;color:#a84f28;line-height:18px">Reinforced Column and beam for fence</div>
<div class="a" style="left:100px;top:589.2px;width:1173px;height:23.4px;background:#ececec"></div>
<div class="a" style="left:100px;top:611.4px;width:1173px;height:1.2px;background:#a9d4f8"></div>
<div class="a" style="left:106px;top:592.7px;font-size:14.2px;letter-spacing:0.3px;font-weight:bold;color:#141a78;line-height:18px">Raft Foundation</div>
<div class="a" style="left:746px;top:592.7px;width:94px;text-align:right;font-size:15px;font-weight:bold;color:#141a78;line-height:18px">70%</div>
<div class="a" style="left:791px;top:592.7px;width:94px;text-align:right;font-size:15px;font-weight:bold;color:#141a78;line-height:18px">30%</div>
<div class="a" style="left:835px;top:592.7px;width:94px;text-align:right;font-size:15px;font-weight:bold;color:#141a78;line-height:18px">70%</div>
<div class="a" style="left:880px;top:592.7px;width:94px;text-align:right;font-size:15px;font-weight:bold;color:#141a78;line-height:18px">50%</div>
<div class="a" style="left:925px;top:592.7px;width:94px;text-align:right;font-size:15px;font-weight:bold;color:#141a78;line-height:18px">1%</div>
<div class="a" style="left:970px;top:592.7px;width:94px;text-align:right;font-size:15px;font-weight:bold;color:#141a78;line-height:18px">50%</div>
<div class="a" style="left:1015px;top:592.7px;width:94px;text-align:right;font-size:15px;font-weight:bold;color:#141a78;line-height:18px">50%</div>
<div class="a" style="left:1060px;top:592.7px;width:94px;text-align:right;font-size:15px;font-weight:bold;color:#141a78;line-height:18px">50%</div>
<div class="a" style="left:100px;top:634.8px;width:1173px;height:1.2px;background:#a9d4f8"></div>
<div class="a" style="left:106px;top:616.1px;font-size:14.2px;letter-spacing:0.3px;font-weight:bold;color:#a84f28;line-height:18px">P.C under Raft</div>
<div class="a" style="left:100px;top:636.0px;width:1173px;height:23.4px;background:#ececec"></div>
<div class="a" style="left:100px;top:658.2px;width:1173px;height:1.2px;background:#a9d4f8"></div>
<div class="a" style="left:106px;top:639.5px;font-size:14.2px;letter-spacing:0.3px;font-weight:bold;color:#141a78;line-height:18px">P.C &amp;RFT Concrete for the fence footings</div>
<div class="a" style="left:100px;top:681.6px;width:1173px;height:1.2px;background:#a9d4f8"></div>
<div class="a" style="left:106px;top:662.9px;font-size:14.2px;letter-spacing:0.3px;font-weight:bold;color:#a84f28;line-height:18px">GF_Slab</div>
<div class="a" style="left:567px;top:662.9px;width:94px;text-align:right;font-size:15px;font-weight:bold;color:#a84f28;line-height:18px">70%</div>
<div class="a" style="left:701px;top:662.9px;width:94px;text-align:right;font-size:15px;font-weight:bold;color:#a84f28;line-height:18px">50%</div>
<div class="a" style="left:100px;top:682.8px;width:1173px;height:23.4px;background:#ececec"></div>
<div class="a" style="left:100px;top:705.0px;width:1173px;height:1.2px;background:#a9d4f8"></div>
<div class="a" style="left:106px;top:686.3px;font-size:14.2px;letter-spacing:0.3px;font-weight:bold;color:#141a78;line-height:18px">GF_Columns</div>
<div class="a" style="left:435px;top:686.3px;width:94px;text-align:right;font-size:15px;font-weight:bold;color:#141a78;line-height:18px">30%</div>
<div class="a" style="left:100px;top:728.4px;width:1173px;height:1.2px;background:#a9d4f8"></div>
<div class="a" style="left:106px;top:709.7px;font-size:14.2px;letter-spacing:0.3px;font-weight:bold;color:#a84f28;line-height:18px">FF_Slab</div>
<div class="a" style="left:100px;top:729.6px;width:1173px;height:23.4px;background:#ececec"></div>
<div class="a" style="left:106px;top:733.1px;font-size:14.2px;letter-spacing:0.3px;font-weight:bold;color:#141a78;line-height:18px">FF_Columns</div>
<div class="a" style="left:391px;top:733.1px;width:94px;text-align:right;font-size:15px;font-weight:bold;color:#141a78;line-height:18px">50%</div>
<div class="a" style="left:479px;top:733.1px;width:94px;text-align:right;font-size:15px;font-weight:bold;color:#141a78;line-height:18px">30%</div>
<div class="a" style="left:523px;top:733.1px;width:94px;text-align:right;font-size:15px;font-weight:bold;color:#141a78;line-height:18px">30%</div>
<div class="a" style="left:611px;top:733.1px;width:94px;text-align:right;font-size:15px;font-weight:bold;color:#141a78;line-height:18px">30%</div>
<div class="a" style="left:656px;top:733.1px;width:94px;text-align:right;font-size:15px;font-weight:bold;color:#141a78;line-height:18px">30%</div>
<div class="a" style="left:1105px;top:733.1px;width:94px;text-align:right;font-size:15px;font-weight:bold;color:#141a78;line-height:18px">30%</div>
<div class="a" style="left:1150px;top:733.1px;width:94px;text-align:right;font-size:15px;font-weight:bold;color:#141a78;line-height:18px">30%</div>
<div class="a" style="left:1195px;top:733.1px;width:94px;text-align:right;font-size:15px;font-weight:bold;color:#141a78;line-height:18px">30%</div>
<div class="c" style="left:383.5px;top:490px;width:80px;font-size:15px;font-weight:bold;color:#fff;line-height:18px">V 3</div>
<div class="c" style="left:429.0px;top:490px;width:80px;font-size:15px;font-weight:bold;color:#fff;line-height:18px">V 4</div>
<div class="c" style="left:473.0px;top:490px;width:80px;font-size:15px;font-weight:bold;color:#fff;line-height:18px">V 5</div>
<div class="c" style="left:517.0px;top:490px;width:80px;font-size:15px;font-weight:bold;color:#fff;line-height:18px">V 6</div>
<div class="c" style="left:561.0px;top:490px;width:80px;font-size:15px;font-weight:bold;color:#fff;line-height:18px">V 7</div>
<div class="c" style="left:605.0px;top:490px;width:80px;font-size:15px;font-weight:bold;color:#fff;line-height:18px">V 8</div>
<div class="c" style="left:649.0px;top:490px;width:80px;font-size:15px;font-weight:bold;color:#fff;line-height:18px">V 9</div>
<div class="c" style="left:693.5px;top:490px;width:80px;font-size:15px;font-weight:bold;color:#fff;line-height:18px">V 10</div>
<div class="c" style="left:738.5px;top:490px;width:80px;font-size:15px;font-weight:bold;color:#fff;line-height:18px">V 12</div>
<div class="c" style="left:783.5px;top:490px;width:80px;font-size:15px;font-weight:bold;color:#fff;line-height:18px">V 18</div>
<div class="c" style="left:828.5px;top:490px;width:80px;font-size:15px;font-weight:bold;color:#fff;line-height:18px">V 19</div>
<div class="c" style="left:873.0px;top:490px;width:80px;font-size:15px;font-weight:bold;color:#fff;line-height:18px">V 24</div>
<div class="c" style="left:917.5px;top:490px;width:80px;font-size:15px;font-weight:bold;color:#fff;line-height:18px">V 25</div>
<div class="c" style="left:962.5px;top:490px;width:80px;font-size:15px;font-weight:bold;color:#fff;line-height:18px">V 26</div>
<div class="c" style="left:1007.5px;top:490px;width:80px;font-size:15px;font-weight:bold;color:#fff;line-height:18px">V 31</div>
<div class="c" style="left:1052.5px;top:490px;width:80px;font-size:15px;font-weight:bold;color:#fff;line-height:18px">V 32</div>
<div class="c" style="left:1097.5px;top:490px;width:80px;font-size:15px;font-weight:bold;color:#fff;line-height:18px">V 36</div>
<div class="c" style="left:1142.5px;top:490px;width:80px;font-size:15px;font-weight:bold;color:#fff;line-height:18px">V 44</div>
<div class="c" style="left:1187.5px;top:490px;width:80px;font-size:15px;font-weight:bold;color:#fff;line-height:18px">V 45</div>
<div class="c" style="left:1232.5px;top:490px;width:80px;font-size:15px;font-weight:bold;color:#fff;line-height:18px">V 46</div>
<div class="a" style="left:399px;top:486px;width:2px;height:267px;background:#62b0f4"></div>
<div class="a" style="left:446px;top:486px;width:2px;height:267px;background:#62b0f4"></div>
<div class="a" style="left:490px;top:486px;width:2px;height:267px;background:#62b0f4"></div>
<div class="a" style="left:534px;top:486px;width:2px;height:267px;background:#62b0f4"></div>
<div class="a" style="left:578px;top:486px;width:2px;height:267px;background:#62b0f4"></div>
<div class="a" style="left:622px;top:486px;width:2px;height:267px;background:#62b0f4"></div>
<div class="a" style="left:666px;top:486px;width:2px;height:267px;background:#62b0f4"></div>
<div class="a" style="left:710px;top:486px;width:2px;height:267px;background:#62b0f4"></div>
<div class="a" style="left:755px;top:486px;width:2px;height:267px;background:#62b0f4"></div>
<div class="a" style="left:800px;top:486px;width:2px;height:267px;background:#62b0f4"></div>
<div class="a" style="left:845px;top:486px;width:2px;height:267px;background:#62b0f4"></div>
<div class="a" style="left:890px;top:486px;width:2px;height:267px;background:#62b0f4"></div>
<div class="a" style="left:934px;top:486px;width:2px;height:267px;background:#62b0f4"></div>
<div class="a" style="left:979px;top:486px;width:2px;height:267px;background:#62b0f4"></div>
<div class="a" style="left:1024px;top:486px;width:2px;height:267px;background:#62b0f4"></div>
<div class="a" style="left:1069px;top:486px;width:2px;height:267px;background:#62b0f4"></div>
<div class="a" style="left:1114px;top:486px;width:2px;height:267px;background:#62b0f4"></div>
<div class="a" style="left:1159px;top:486px;width:2px;height:267px;background:#62b0f4"></div>
<div class="a" style="left:1204px;top:486px;width:2px;height:267px;background:#62b0f4"></div>
<div class="a" style="left:1249px;top:486px;width:2px;height:267px;background:#62b0f4"></div>
</div>
<div class="a" style="left:100px;top:852.5px;width:211px;height:7px;background:#b0b0b0;border-radius:4px"></div>
<div class="a" style="left:1179px;top:470px;width:29px;height:28px;background:#fff"></div>
<div class="a" style="left:1213px;top:470px;width:30px;height:28px;background:#fff"></div>
<div class="a" style="left:1248px;top:470px;width:30px;height:28px;background:#fff"></div>
<svg class="a" style="left:1170px;top:462px" width="116" height="40" viewBox="1170 462 116 40">
<path d="M1184 476.5 H1203 L1195.5 486 V493.5 H1191.5 V486 Z" fill="none" stroke="#707070" stroke-width="1.2" stroke-linejoin="round"/>
<path d="M1228.5 478.7 H1219.6 V493.2 H1236.6 V483.5 M1219.6 488.3 H1227.6 V493.2 M1230 485.3 L1236.2 479.1 M1231.8 478.7 H1236.6 V483" fill="none" stroke="#707070" stroke-width="1.2"/>
<g fill="#707070"><circle cx="1255.2" cy="484.8" r="1.5"/><circle cx="1262.6" cy="484.8" r="1.5"/><circle cx="1270" cy="484.8" r="1.5"/></g>
</svg>
<div class="a" style="left:95px;top:877px;width:1183px;height:59px;background:#fff"></div>
<div class="a" style="left:122.0px;top:885px;width:124px;height:44px;background:#858585;border:1px solid #6a6a6a"></div>
<div class="c" style="left:122.0px;top:899.5px;width:124px;font-size:13.5px;font-weight:bold;color:#fff;line-height:16px">Select all</div>
<div class="a" style="left:247.9px;top:885px;width:124px;height:44px;background:#333;border:1px solid #2a2a2a"></div>
<div class="c" style="left:247.9px;top:899.5px;width:124px;font-size:13.5px;font-weight:bold;color:#fff;line-height:16px">Concrete</div>
<div class="a" style="left:373.8px;top:885px;width:124px;height:44px;background:#fff;border:1px solid #8f8f8f"></div>
<div class="c" style="left:373.8px;top:899.5px;width:124px;font-size:13.5px;font-weight:bold;color:#a45bb8;line-height:16px">Masonary</div>
<div class="a" style="left:499.7px;top:885px;width:124px;height:44px;background:#fff;border:1px solid #8f8f8f"></div>
<div class="c" style="left:499.7px;top:899.5px;width:124px;font-size:13.5px;font-weight:bold;color:#a45bb8;line-height:16px">Metals</div>
<div class="a" style="left:625.6px;top:885px;width:124px;height:44px;background:#fff;border:1px solid #8f8f8f"></div>
<div class="c" style="left:625.6px;top:899.5px;width:124px;font-size:13.5px;font-weight:bold;color:#a45bb8;line-height:16px"><span style="letter-spacing:0.35px">Thermal&amp;Moi...</span></div>
<div class="a" style="left:751.5px;top:885px;width:124px;height:44px;background:#fff;border:1px solid #8f8f8f"></div>
<div class="c" style="left:751.5px;top:899.5px;width:124px;font-size:13.5px;font-weight:bold;color:#a45bb8;line-height:16px">Doors&amp;Wins</div>
<div class="a" style="left:877.4px;top:885px;width:124px;height:44px;background:#fff;border:1px solid #8f8f8f"></div>
<div class="c" style="left:877.4px;top:899.5px;width:124px;font-size:13.5px;font-weight:bold;color:#a45bb8;line-height:16px">Finishes</div>
<div class="a" style="left:1003.3px;top:885px;width:124px;height:44px;background:#fff;border:1px solid #8f8f8f"></div>
<div class="c" style="left:1003.3px;top:899.5px;width:124px;font-size:13.5px;font-weight:bold;color:#a45bb8;line-height:16px">Mechanical</div>
<div class="a" style="left:1129.2px;top:885px;width:124px;height:44px;background:#fff;border:1px solid #8f8f8f"></div>
<div class="c" style="left:1129.2px;top:899.5px;width:124px;font-size:13.5px;font-weight:bold;color:#a45bb8;line-height:16px">Electrical</div>
</body></html>
